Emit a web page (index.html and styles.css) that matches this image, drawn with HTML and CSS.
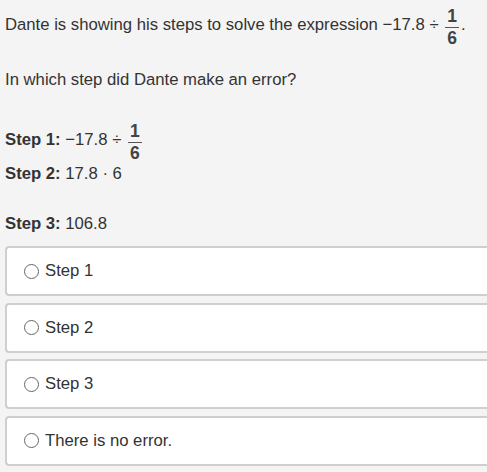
FILE: index.html
```html
<!DOCTYPE html>
<html>
<head>
<meta charset="utf-8">
<link rel="stylesheet" href="styles.css">
</head>
<body>
<div class="page">
  <p class="intro">Dante is showing his steps to solve the expression −17.8 ÷ <span class="frac"><span class="num">1</span><span class="den">6</span></span>.</p>
  <p class="ask">In which step did Dante make an error?</p>
  <p class="step step1"><b>Step 1:</b> −17.8 ÷ <span class="frac"><span class="num">1</span><span class="den">6</span></span></p>
  <p class="step step2"><b>Step 2:</b> 17.8 · 6</p>
  <p class="step step3"><b>Step 3:</b> 106.8</p>
  <div class="options">
    <label class="opt"><span class="radio"></span><span>Step 1</span></label>
    <label class="opt"><span class="radio"></span><span>Step 2</span></label>
    <label class="opt"><span class="radio"></span><span>Step 3</span></label>
    <label class="opt"><span class="radio"></span><span>There is no error.</span></label>
  </div>
</div>
</body>
</html>
```
FILE: styles.css
```css
html, body {
  margin: 0;
  padding: 0;
  background: #f4f4f4;
  overflow: hidden;
}
body {
  font-family: "Liberation Sans", Arial, sans-serif;
  font-size: 16.7px;
  color: #333;
}
.page {
  padding: 0 0 0 5px;
}
p {
  margin: 0;
  line-height: 20px;
}
.intro {
  padding-top: 7px;
}
.ask {
  margin-top: 22px;
}
.step1 {
  margin-top: 32px;
}
.step2 {
  margin-top: 1px;
}
.step3 {
  margin-top: 30px;
}
.frac {
  display: inline-flex;
  flex-direction: column;
  align-items: stretch;
  vertical-align: 8px;
  padding: 0 2px;
  font-size: 17.5px;
  font-weight: bold;
  color: #444;
  text-align: center;
}
.num {
  line-height: 19px;
  padding-bottom: 1px;
  border-bottom: 1px solid #555;
  padding-left: 2px;
  padding-right: 2px;
}
.den {
  line-height: 19px;
  padding-top: 1px;
}
.options {
  margin-top: 12px;
  display: flex;
  flex-direction: column;
  gap: 6.5px;
}
.opt {
  display: flex;
  align-items: center;
  gap: 6px;
  height: 46px;
  padding-left: 17px;
  background: #fff;
  border: 2px solid #cfcfcf;
  border-right: none;
  border-radius: 4px 0 0 4px;
}
.radio {
  width: 13px;
  height: 13px;
  border: 1px solid #666;
  border-radius: 50%;
  background: #fff;
}
```
